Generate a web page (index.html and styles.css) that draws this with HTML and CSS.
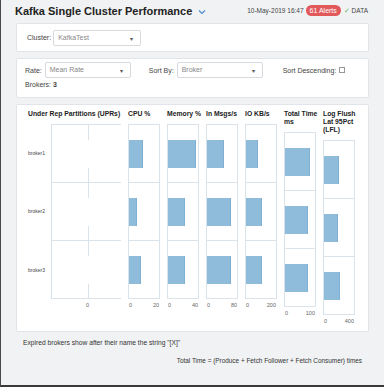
FILE: index.html
```html
<!DOCTYPE html>
<html lang="en">
<head>
    <meta charset="UTF-8">
    <title>Kafka Single Cluster Performance</title>
    <link rel="stylesheet" href="styles.css">
</head>
<body>
<div class="page">
    <header class="top-bar">
        <h1 class="title">Kafka Single Cluster Performance</h1>
        <svg class="chevron" width="8" height="6" viewBox="0 0 8 6"><path d="M1 1.5 L4 4.5 L7 1.5" fill="none" stroke="#4a8ad0" stroke-width="1.2"/></svg>
        <div class="status">
            <span class="stamp">10-May-2019 16:47</span>
            <span class="alerts">61 Alerts</span>
            <span class="data"><span class="check">&#10003;</span> DATA</span>
        </div>
    </header>

    <div class="card card-cluster">
        <span class="label">Cluster:</span>
        <div class="select select-cluster">KafkaTest<span class="caret">&#9662;</span></div>
    </div>

    <div class="card card-filters">
        <div class="filter-row">
            <span class="label">Rate:</span>
            <div class="select">Mean Rate<span class="caret">&#9662;</span></div>
            <span class="label sort-label">Sort By:</span>
            <div class="select">Broker<span class="caret">&#9662;</span></div>
            <span class="label desc-label">Sort Descending:</span>
            <span class="checkbox"></span>
        </div>
        <div class="brokers">Brokers: <b>3</b></div>
    </div>

    <div class="card card-charts">
        <div class="chart-col first">
            <div class="chart-head">Under Rep Partitions (UPRs)</div>
            <div class="first-body">
                <div class="broker-labels">
                    <div>broker1</div>
                    <div>broker2</div>
                    <div>broker3</div>
                </div>
                <div class="plot-wrap">
                    <div class="plot upr">
                        <div class="row"><span class="gap"></span></div>
                        <div class="row"><span class="gap"></span></div>
                        <div class="row"><span class="gap"></span></div>
                    </div>
                    <div class="axis center"><span>0</span></div>
                </div>
            </div>
        </div>

        <div class="chart-col">
            <div class="chart-head">CPU %</div>
            <div class="plot">
                <div class="row"><span class="bar" style="width: 47%"></span></div>
                <div class="row"><span class="bar" style="width: 25%"></span></div>
                <div class="row"><span class="bar" style="width: 41%"></span></div>
            </div>
            <div class="axis"><span>0</span><span>20</span></div>
        </div>

        <div class="chart-col">
            <div class="chart-head">Memory %</div>
            <div class="plot">
                <div class="row"><span class="bar" style="width: 94%"></span></div>
                <div class="row"><span class="bar" style="width: 56%"></span></div>
                <div class="row"><span class="bar" style="width: 56%"></span></div>
            </div>
            <div class="axis"><span>0</span><span>40</span></div>
        </div>

        <div class="chart-col">
            <div class="chart-head">In Msgs/s</div>
            <div class="plot">
                <div class="row"><span class="bar" style="width: 56%"></span></div>
                <div class="row"><span class="bar" style="width: 81%"></span></div>
                <div class="row"><span class="bar" style="width: 81%"></span></div>
            </div>
            <div class="axis"><span>0</span><span>80</span></div>
        </div>

        <div class="chart-col">
            <div class="chart-head">IO KB/s</div>
            <div class="plot">
                <div class="row"><span class="bar" style="width: 41%"></span></div>
                <div class="row"><span class="bar" style="width: 53%"></span></div>
                <div class="row"><span class="bar" style="width: 53%"></span></div>
            </div>
            <div class="axis"><span>0</span><span>200</span></div>
        </div>

        <div class="chart-col">
            <div class="chart-head">Total Time ms</div>
            <div class="plot">
                <div class="row"><span class="bar" style="width: 84%"></span></div>
                <div class="row"><span class="bar" style="width: 75%"></span></div>
                <div class="row"><span class="bar" style="width: 75%"></span></div>
            </div>
            <div class="axis"><span>0</span><span>100</span></div>
        </div>

        <div class="chart-col">
            <div class="chart-head">Log Flush Lat 95Pct (LFL)</div>
            <div class="plot">
                <div class="row"><span class="bar" style="width: 50%"></span></div>
                <div class="row"><span class="bar" style="width: 47%"></span></div>
                <div class="row"><span class="bar" style="width: 53%"></span></div>
            </div>
            <div class="axis"><span>0</span><span>400</span></div>
        </div>
    </div>

    <p class="note">Expired brokers show after their name the string "[X]"</p>
    <p class="note right">Total Time = (Produce + Fetch Follower + Fetch Consumer) times</p>
</div>
</body>
</html>
```

FILE: styles.css
```css
:root {
    --bg-color: #f1f2f4;
    --card-bg: #ffffff;
    --card-border: #e1e4e8;
    --text-color: #333;
    --muted: #666;
    --grid: #dbe3ea;
    --bar: #8fbcdb;
    --bar-edge: #7fb0d3;
}

* {
    box-sizing: border-box;
}

body {
    margin: 0;
    font-family: 'Liberation Sans', Arial, sans-serif;
    color: var(--text-color);
}

.page {
    width: 384px;
    height: 387px;
    background-color: var(--bg-color);
    border-left: 1px solid #4a4a4a;
    border-bottom: 2px solid #3a3a3a;
    overflow: hidden;
}

/* Top bar */
.top-bar {
    display: flex;
    align-items: center;
    height: 23px;
    padding: 0 16px 2px 14px;
}

.title {
    margin: 0;
    font-size: 11px;
    font-weight: bold;
    color: #222;
}

.chevron {
    margin-left: 6px;
    margin-top: 2px;
}

.status {
    margin-left: auto;
    display: flex;
    align-items: center;
    font-size: 6.5px;
    color: #444;
}

.alerts {
    background-color: #e2595b;
    color: #fff;
    border-radius: 6px;
    padding: 2px 4px;
    margin-left: 2px;
    font-size: 7px;
}

.data {
    margin-left: 3px;
}

.check {
    color: #5cb85c;
    font-size: 7px;
}

/* Cards */
.card {
    background-color: var(--card-bg);
    border: 1px solid var(--card-border);
    border-radius: 2px;
    margin: 0 15px 6px 15px;
}

.label {
    font-size: 7px;
    color: #444;
}

.select {
    position: relative;
    height: 16px;
    border: 1px solid #d6d9dd;
    border-radius: 2px;
    padding: 3px 4px;
    font-size: 7px;
    color: #888;
    width: 86px;
}

.caret {
    position: absolute;
    right: 7px;
    top: 4px;
    font-size: 6px;
    color: #555;
}

.card-cluster {
    display: flex;
    align-items: center;
    height: 29px;
    padding-left: 10px;
}

.card-cluster .select {
    margin-left: 2px;
    width: 88px;
}

.card-filters {
    height: 40px;
    padding: 3px 8px 0 8px;
}

.filter-row {
    display: flex;
    align-items: center;
}

.filter-row .select {
    margin-left: 3px;
}

.sort-label {
    margin-left: 18px;
}

.desc-label {
    margin-left: 20px;
}

.checkbox {
    width: 6px;
    height: 6px;
    border: 1px solid #999;
    margin-left: 3px;
}

.brokers {
    font-size: 7px;
    color: #444;
    margin-top: 3px;
}

/* Charts */
.card-charts {
    display: flex;
    gap: 7px;
    height: 228px;
    padding: 5px 0 0 11px;
}

.chart-col {
    width: 32px;
    display: flex;
    flex-direction: column;
}

.chart-col.first {
    width: 93px;
}

.chart-head {
    width: 39px;
    font-size: 6.8px;
    font-weight: bold;
    line-height: 8px;
    color: #222;
    margin-bottom: 6px;
}

.first .chart-head {
    width: auto;
    white-space: nowrap;
}

.first-body {
    display: flex;
}

.broker-labels {
    width: 23px;
    height: 175px;
    display: flex;
    flex-direction: column;
    font-size: 5px;
    color: #444;
}

.broker-labels div {
    flex: 1;
    display: flex;
    align-items: center;
}

.plot-wrap {
    width: 70px;
}

.plot {
    height: 175px;
    border: 1px solid var(--grid);
    display: flex;
    flex-direction: column;
}

.plot .row {
    flex: 1;
    display: flex;
    align-items: center;
    border-top: 1px solid var(--grid);
}

.plot .row:first-child {
    border-top: none;
}

.bar {
    display: block;
    height: 28px;
    background-color: var(--bar);
    border-right: 1px solid var(--bar-edge);
}

.plot.upr {
    border-right: none;
    position: relative;
}

.plot.upr::before {
    content: "";
    position: absolute;
    left: 36px;
    top: 0;
    bottom: 0;
    border-left: 1px solid var(--grid);
}

.upr .gap {
    position: relative;
    z-index: 1;
    display: block;
    width: 100%;
    height: 28px;
    background-color: var(--card-bg);
}

.axis {
    display: flex;
    justify-content: space-between;
    font-size: 5.5px;
    color: var(--muted);
    padding: 3px 1px 0 1px;
}

.axis.center {
    justify-content: flex-start;
    padding-left: 35px;
}

/* Notes */
.note {
    margin: 7px 0 0 22px;
    font-size: 6.7px;
    color: #333;
}

.note.right {
    margin: 11px 22px 0 0;
    font-size: 6.4px;
    text-align: right;
}
```
